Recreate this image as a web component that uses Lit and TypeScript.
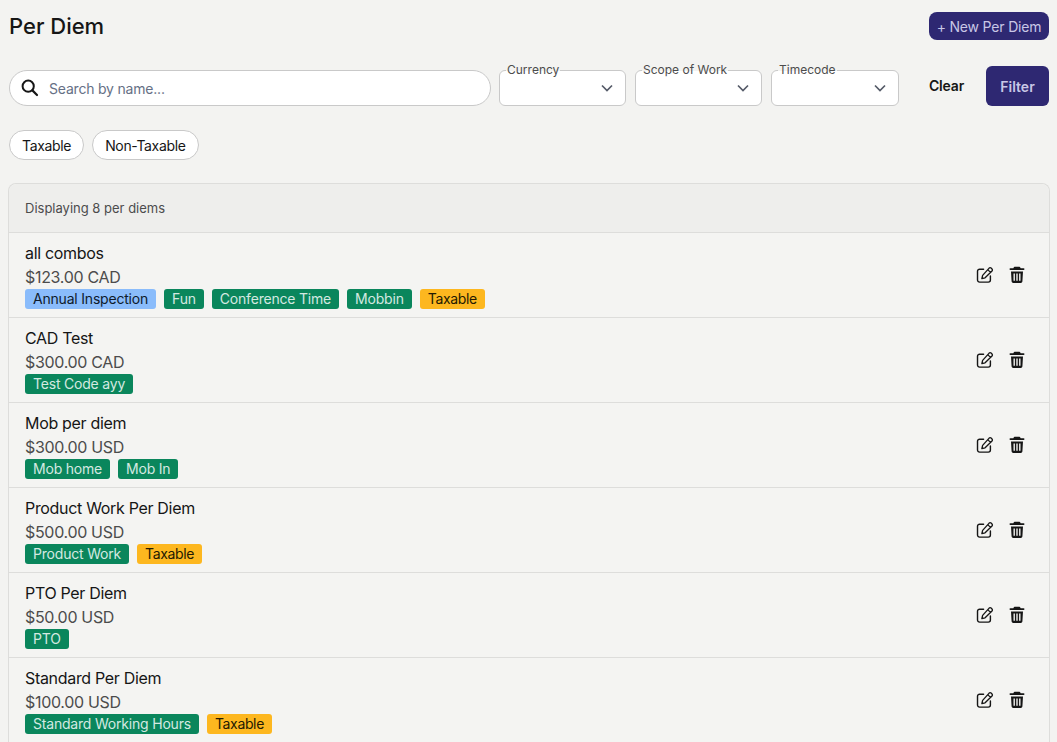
import { LitElement, css, html, svg } from 'lit';
import { customElement } from 'lit/decorators.js';
import { map } from 'lit/directives/map.js';

type TagKind = 'green' | 'blue' | 'amber';

interface Tag {
  label: string;
  kind: TagKind;
}

interface PerDiem {
  name: string;
  amount: string;
  tags: Tag[];
}

const green = (label: string): Tag => ({ label, kind: 'green' });
const taxable: Tag = { label: 'Taxable', kind: 'amber' };

const perDiems: PerDiem[] = [
  {
    name: 'all combos',
    amount: '$123.00 CAD',
    tags: [{ label: 'Annual Inspection', kind: 'blue' }, green('Fun'), green('Conference Time'), green('Mobbin'), taxable],
  },
  { name: 'CAD Test', amount: '$300.00 CAD', tags: [green('Test Code ayy')] },
  { name: 'Mob per diem', amount: '$300.00 USD', tags: [green('Mob home'), green('Mob In')] },
  { name: 'Product Work Per Diem', amount: '$500.00 USD', tags: [green('Product Work'), taxable] },
  { name: 'PTO Per Diem', amount: '$50.00 USD', tags: [green('PTO')] },
  { name: 'Standard Per Diem', amount: '$100.00 USD', tags: [green('Standard Working Hours'), taxable] },
];

const searchIcon = svg`<circle cx="7.2" cy="7.2" r="5.6" fill="none" stroke="currentColor" stroke-width="2"/>
  <path d="M11.4 11.4 16 16" fill="none" stroke="currentColor" stroke-width="2.2" stroke-linecap="round"/>`;

const editIcon = svg`<path d="M8 3.4H3.8A2.2 2.2 0 0 0 1.6 5.6v9.2A2.2 2.2 0 0 0 3.8 17H13a2.2 2.2 0 0 0 2.2-2.2V10.6" fill="none" stroke="currentColor" stroke-width="1.5" stroke-linecap="round"/>
  <path d="M13.9 2.2a1.4 1.4 0 0 1 2 0l1 1a1.4 1.4 0 0 1 0 2L9.6 12.5l-3.4.8.8-3.4z M12.4 3.8l2.9 2.9" fill="none" stroke="currentColor" stroke-width="1.4" stroke-linejoin="round"/>`;

const trashIcon = svg`<path fill-rule="evenodd" fill="currentColor" d="M5.6 .8h4.8a1 1 0 0 1 .9.6l.4.8h2.9a.9.9 0 0 1 0 1.8H1.4a.9.9 0 0 1 0-1.8h2.9l.4-.8a1 1 0 0 1 .9-.6z M2 5.4h12l-.6 10.2a1.6 1.6 0 0 1-1.6 1.4H4.2a1.6 1.6 0 0 1-1.6-1.4z M4.5 7.6v7.2h1.4V7.6z M7.3 7.6v7.2h1.4V7.6z M10.1 7.6v7.2h1.4V7.6z"/>`;

@customElement('app-root')
export class AppRoot extends LitElement {
  static styles = css`
    :host {
      display: block;
      height: 742px;
      overflow: hidden;
      box-sizing: border-box;
      padding: 12px 8px 0 8px;
      background: #f3f3f1;
      color: #161616;
      font-family: Inter, 'Liberation Sans', sans-serif;
      font-size: 14px;
      letter-spacing: -0.2px;
    }

    .top {
      display: flex;
      justify-content: space-between;
      align-items: center;
      padding-left: 1px;
      height: 28px;
    }

    h1 {
      margin: 0;
      font-size: 22px;
      font-weight: 500;
      letter-spacing: 0;
      line-height: 30px;
    }

    .new {
      height: 28px;
      width: 120px;
      border: none;
      border-radius: 8px;
      background: #2e2872;
      color: #c9c7e6;
      font: 400 14px Inter, 'Liberation Sans', sans-serif;
      letter-spacing: -0.18px;
      padding: 0;
    }

    .filters {
      display: flex;
      align-items: flex-end;
      margin-top: 26px;
      padding-left: 1px;
      height: 40px;
    }

    .search {
      display: flex;
      align-items: center;
      gap: 10px;
      box-sizing: border-box;
      width: 482px;
      height: 36px;
      margin-right: 8px;
      padding-left: 11px;
      background: #fff;
      border: 1px solid #c9c9c9;
      border-radius: 18px;
      color: #667085;
    }

    .search svg {
      width: 18px;
      height: 18px;
      color: #161616;
    }

    .select {
      position: relative;
      box-sizing: border-box;
      width: 127px;
      height: 36px;
      margin-right: 9px;
      background: #fff;
      border: 1px solid #c9c9c9;
      border-radius: 6px;
    }

    .select label {
      position: absolute;
      left: 6px;
      top: -8px;
      padding: 0 1px;
      background: linear-gradient(#f3f3f1 8px, #fff 8px);
      color: #4c4c4c;
      font-size: 12px;
      letter-spacing: 0;
      line-height: 14px;
    }

    .select svg {
      position: absolute;
      right: 12px;
      top: 13px;
      width: 12px;
      height: 8px;
      color: #555b68;
    }

    .select:last-of-type {
      width: 128px;
    }

    .clear {
      margin: 0 0 10px 21px;
      font-weight: 600;
      line-height: 20px;
    }

    .filter {
      box-sizing: border-box;
      width: 63px;
      height: 40px;
      margin-left: auto;
      border: none;
      border-radius: 6px;
      background: #2e2872;
      color: #c9c7e6;
      font: 600 14px Inter, 'Liberation Sans', sans-serif;
      padding: 0;
    }

    .chips {
      display: flex;
      gap: 8px;
      margin-top: 24px;
      padding-left: 1px;
      letter-spacing: -0.34px;
    }

    .chip {
      box-sizing: border-box;
      height: 30px;
      padding: 0 12px;
      display: flex;
      align-items: center;
      background: #fff;
      border: 1px solid #c9c9c9;
      border-radius: 15px;
    }

    .card {
      margin: 23px -1px 0 0;
      border: 1px solid #dddddb;
      border-bottom: none;
      border-radius: 8px 8px 0 0;
    }

    .card-head {
      box-sizing: border-box;
      height: 48px;
      padding: 0 16px;
      display: flex;
      align-items: center;
      background: #eeeeec;
      border-radius: 8px 8px 0 0;
      color: #4c4c4c;
      font-size: 13px;
      letter-spacing: 0;
    }

    .row {
      box-sizing: border-box;
      height: 85px;
      padding: 9px 16px 0;
      display: flex;
      justify-content: space-between;
      align-items: center;
      border-top: 1px solid #dddddb;
      background: #f4f4f2;
    }

    .info {
      align-self: flex-start;
    }

    .name {
      font-size: 16px;
      letter-spacing: -0.32px;
      line-height: 22px;
    }

    .amount {
      margin-top: 2px;
      color: #4c4c4c;
      font-size: 16px;
      letter-spacing: -0.32px;
      line-height: 22px;
    }

    .tags {
      display: flex;
      gap: 8px;
      margin-top: 1px;
    }

    .tag {
      height: 20px;
      padding: 0 8px;
      border-radius: 3px;
      line-height: 20px;
      white-space: nowrap;
    }

    .tag.green {
      background: #0a865c;
      color: #d4e9e1;
    }

    .tag.blue {
      background: #8abcfb;
      color: #0e1a2b;
    }

    .tag.amber {
      background: #fdb71f;
      color: #241a02;
      letter-spacing: -0.35px;
    }

    .actions {
      display: flex;
      align-items: center;
      gap: 15px;
      margin: -9px 8px 0 0;
    }

    .actions svg {
      display: block;
      width: 18px;
      height: 18px;
    }

    .actions .trash {
      width: 16px;
      height: 18px;
    }
  `;

  private renderSelect(label: string) {
    return html`<div class="select">
      <label>${label}</label>
      <svg viewBox="0 0 12 8"><path d="M1 1.5l5 5 5-5" fill="none" stroke="currentColor" stroke-width="1.7" /></svg>
    </div>`;
  }

  private renderRow(item: PerDiem) {
    return html`<div class="row">
      <div class="info">
        <div class="name">${item.name}</div>
        <div class="amount">${item.amount}</div>
        <div class="tags">
          ${map(item.tags, (tag) => html`<span class="tag ${tag.kind}">${tag.label}</span>`)}
        </div>
      </div>
      <div class="actions">
        <svg viewBox="0 0 19 19">${editIcon}</svg>
        <svg class="trash" viewBox="0 0 16 18">${trashIcon}</svg>
      </div>
    </div>`;
  }

  render() {
    return html`
      <div class="top">
        <h1>Per Diem</h1>
        <button class="new">+ New Per Diem</button>
      </div>
      <div class="filters">
        <div class="search">
          <svg viewBox="0 0 18 18">${searchIcon}</svg>
          <span>Search by name...</span>
        </div>
        ${this.renderSelect('Currency')} ${this.renderSelect('Scope of Work')} ${this.renderSelect('Timecode')}
        <span class="clear">Clear</span>
        <button class="filter">Filter</button>
      </div>
      <div class="chips">
        <span class="chip">Taxable</span>
        <span class="chip">Non-Taxable</span>
      </div>
      <div class="card">
        <div class="card-head">Displaying 8 per diems</div>
        ${map(perDiems, (item) => this.renderRow(item))}
      </div>
    `;
  }
}
